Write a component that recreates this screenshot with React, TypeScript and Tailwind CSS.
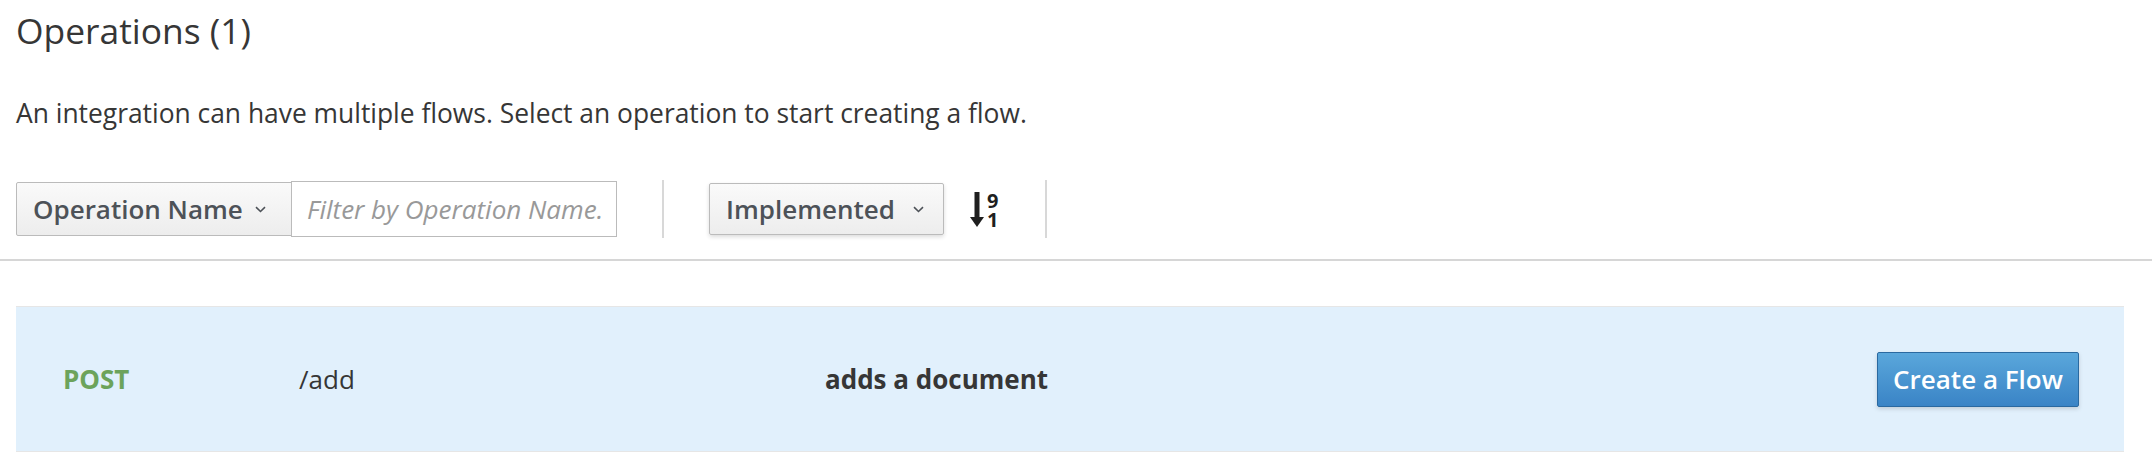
import React from "react";

function Chevron({ className = "" }: { className?: string }) {
  return (
    <svg className={className} width="11" height="7" viewBox="0 0 11 7" fill="none">
      <path d="M1 1.2 L5.5 5.5 L10 1.2" stroke="#4d5258" strokeWidth="1.6" />
    </svg>
  );
}

function SortNumericDesc() {
  return (
    <div className="flex items-center gap-[3px] text-[#1f1f1f]">
      <svg width="14" height="35" viewBox="0 0 14 35">
        <rect x="4.5" y="0" width="5" height="27" fill="#1f1f1f" />
        <polygon points="0,25 14,25 7,35" fill="#1f1f1f" />
      </svg>
      <span className="block whitespace-pre-line font-['Open_Sans'] font-bold text-[20px] leading-[19px] mt-[1px]">
        {"9\n1"}
      </span>
    </div>
  );
}

export default function App() {
  return (
    <div className="w-[2152px] h-[476px] bg-white font-['Open_Sans',sans-serif] text-[#363636] overflow-hidden">
      <div className="px-[16px]">
        <h2 className="pt-[6px] text-[35.4px] leading-[48px] font-normal">Operations (1)</h2>
        <p className="mt-[41px] text-[26.4px] leading-[36px]">
          An integration can have multiple flows. Select an operation to start creating a flow.
        </p>
      </div>

      <div className="mt-[49px] px-[16px] flex items-center h-[58px]">
        <div className="flex items-center h-full pr-[45px] border-r-2 border-[#d8d8d8]">
          <button className="h-[54px] w-[276px] flex items-center justify-between pl-[16px] pr-[25px] border border-[#bbbbbb] rounded-l-[2px] bg-gradient-to-b from-[#fafafa] to-[#ededed] text-[#4d5258] text-[26px] font-semibold">
            <span>Operation Name</span>
            <Chevron />
          </button>
          <input
            className="h-[56px] w-[326px] -ml-px border border-[#bbbbbb] bg-white pl-[15px] pr-[4px] text-[26px] outline-none placeholder:italic placeholder:text-[#999999]"
            placeholder="Filter by Operation Name."
          />
        </div>
        <div className="flex items-center h-full pl-[45px] pr-[47px] border-r-2 border-[#d8d8d8]">
          <button className="h-[52px] w-[235px] flex items-center justify-between pl-[16px] pr-[19px] border border-[#bbbbbb] rounded-[2px] bg-gradient-to-b from-[#fafafa] to-[#ededed] text-[#4d5258] text-[26px] font-semibold shadow-[0_2px_4px_rgba(0,0,0,0.14)]">
            <span>Implemented</span>
            <Chevron />
          </button>
          <div className="ml-[26px]">
            <SortNumericDesc />
          </div>
        </div>
      </div>

      <div className="mt-[21px] h-[2px] bg-[#d6d6d6]" />

      <div className="ml-[16px] mr-[28px] mt-[45px] h-[146px] bg-[#e1f0fc] border-y border-[#e6e6e6] flex items-center pl-[47px] pr-[45px] text-[26px]">
        <div className="w-[236px] font-bold text-[#6ca35b]">POST</div>
        <div className="w-[526px]">/add</div>
        <div className="flex-1 font-bold">adds a document</div>
        <button className="h-[55px] w-[202px] rounded-[2px] border border-[#2a69a0] bg-gradient-to-b from-[#5aa7db] to-[#3a84c6] text-white font-semibold text-[26px] shadow-[0_2px_4px_rgba(0,0,0,0.15)]">
          Create a Flow
        </button>
      </div>
    </div>
  );
}
